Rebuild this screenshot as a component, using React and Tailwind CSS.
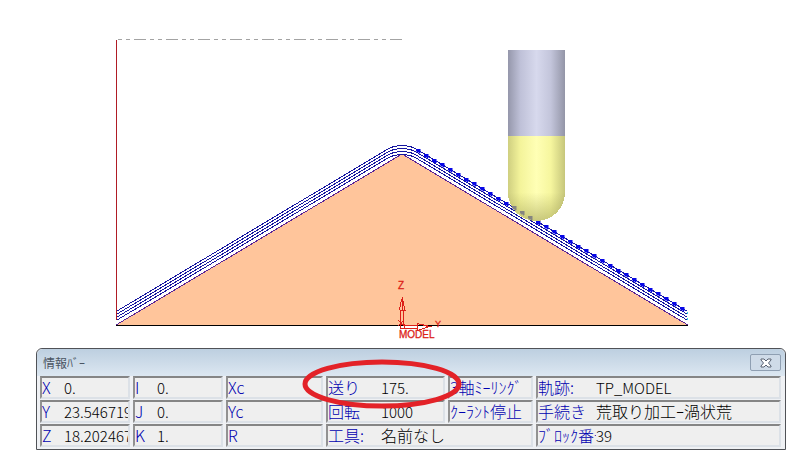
import React from "react";

const passes = [0, 3, 6, 9];
const dots = Array.from({ length: 34 }, (_, i) => ({
  x: 416 + i * 8,
  y: Math.round(149 + i * 4.78),
}));

function Toolpath() {
  return (
    <svg viewBox="0 0 812 348" className="block w-full" role="img" aria-label="Toolpath" shapeRendering="crispEdges">
      <defs>
        <linearGradient id="shank">
          <stop offset="0" stopColor="#9597ab" />
          <stop offset="0.22" stopColor="#bfc1d8" />
          <stop offset="0.5" stopColor="#d7d9ed" />
          <stop offset="0.75" stopColor="#c3c5db" />
          <stop offset="1" stopColor="#9395a7" />
        </linearGradient>
        <linearGradient id="cutter">
          <stop offset="0" stopColor="#cfcf80" />
          <stop offset="0.22" stopColor="#f4f49b" />
          <stop offset="0.5" stopColor="#ffffb5" />
          <stop offset="0.75" stopColor="#f6f69e" />
          <stop offset="1" stopColor="#c6c67b" />
        </linearGradient>
        <linearGradient id="ball" x1="0" y1="0" x2="0" y2="1">
          <stop offset="0" stopColor="#a5a55a" stopOpacity="0" />
          <stop offset="1" stopColor="#a5a55a" stopOpacity="0.6" />
        </linearGradient>
      </defs>

      <path d="M118 39.5H402" stroke="#a3a3a3" strokeDasharray="4 4 4 4 12 4" />
      <path d="M402 154L688 325H116Z" fill="#ffc59b" />
      <path d="M116 325L402 154L688 325" fill="none" stroke="#5a2496" />
      {passes.map((d) => (
        <path
          key={d}
          d={`M117 ${311 + d}L388 ${149 + d}Q394 ${145.5 + d} 402 ${145.5 + d}T416 ${149 + d}L687 ${311 + d}`}
          fill="none"
          stroke="#1717a0"
        />
      ))}
      <path d="M116.5 40V320" stroke="#b01c25" />
      <path d="M116 325.5H688" stroke="#000" />
      <path d="M687.5 312V320" stroke="#37cfe0" strokeDasharray="2 4" />

      <path d="M508 50H565V136H508Z" fill="url(#shank)" />
      <path d="M508 136H565V192.5A28.5 28.5 0 0 1 508 192.5Z" fill="url(#cutter)" />
      <path d="M508 192.5H565A28.5 28.5 0 0 1 508 192.5Z" fill="url(#ball)" />

      {dots.map(({ x, y }) => (
        <path
          key={x}
          d={`M${x} ${y}h4v4h-1v-1h-2v-1h-1z`}
          fill={x > 508 && x < 532 ? "#858580" : "#0707e6"}
          stroke={x > 508 && x < 532 ? "#858580" : "#0707e6"}
          strokeWidth="0.5"
        />
      ))}

      <g fill="none" stroke="#dc1f18">
        <path d="M400.5 325V310M403.5 325V310M399.5 310.5H405.5M399.5 310L401.5 299H402.5L405 310M402.5 297V310" />
        <path d="M403 325.5H418M403 328.5H418M417.5 323V330M417 323.5L430 326.5L417 330.5M426 326.5H432" />
        <path d="M398 320L404 326M404 320L398 326M400 324.5H404V328.5H400Z" />
      </g>
      <g fill="#dc1f18" stroke="#dc1f18" strokeWidth="0.3" className="font-['Liberation_Sans',sans-serif]">
        <text x="398" y="289" fontSize="10">Z</text>
        <text x="435" y="327" fontSize="9">Y</text>
        <text x="399" y="338" fontSize="10">MODEL</text>
      </g>
    </svg>
  );
}

function Cell({ label, value, labelClass = "w-[22px]", valueClass = "", className = "", children }) {
  return (
    <div className={`relative h-[23px] border-2 border-t-[#858585] border-l-[#929292] border-r-[#dce1e7] border-b-[#dce1e7] bg-[#efefef] ${className}`}>
      <dl className="flex h-full items-center text-[16px] leading-[19px] whitespace-nowrap">
        <dt className={`shrink-0 text-[#0000b0] ${labelClass}`}>{label}</dt>
        {value && <dd className={`min-w-0 text-black ${valueClass}`}>{value}</dd>}
      </dl>
      {children}
    </div>
  );
}

const Num = ({ children }) => <span className="text-[15px]">{children}</span>;

export default function App() {
  return (
    <main className="min-h-screen bg-white font-['Noto_Sans_CJK_JP',sans-serif] font-light">
      <Toolpath />
      <section className="mr-[26px] ml-9 rounded-t-md border border-[#505257] bg-[#eff1f4]">
        <header className="flex h-[27px] items-center justify-between rounded-t-md bg-linear-to-b from-[#bdcfe0] to-[#dce7f1] pr-1 pl-1.5">
          <h1 className="text-[12px] leading-5 font-normal text-[#4b5563]">情報ﾊﾞｰ</h1>
          <button
            type="button"
            aria-label="閉じる"
            className="flex h-[17px] w-[31px] items-center justify-center rounded-xs border border-[#8f9fb2] bg-[#cfdbe8]"
          >
            <svg width="12" height="10" viewBox="0 0 12 10">
              <path
                d="M1 1H4L6 3L8 1H11V2L8.5 5L11 8V9H8L6 7L4 9H1V8L3.5 5L1 2Z"
                fill="#fff"
                stroke="#596273"
              />
            </svg>
          </button>
        </header>
        <div className="grid grid-cols-[90px_90px_97px_119px_85px_1fr] gap-x-[3px] gap-y-px pr-1 pb-0.5 pl-[3px]">
          <Cell label="X" value={<Num>0.</Num>} />
          <Cell label="I" value={<Num>0.</Num>} />
          <Cell label="Xc" />
          <Cell label="送り" value={<Num>175.</Num>} labelClass="w-[53px]">
            <svg
              viewBox="0 0 160 50"
              className="pointer-events-none absolute -top-[19px] -left-[26px] z-10 h-[50px] w-[160px] max-w-none"
            >
              <ellipse cx="80" cy="25" rx="77" ry="22" fill="none" stroke="#e32228" strokeWidth="5" />
            </svg>
          </Cell>
          <Cell label="3軸ﾐｰﾘﾝｸﾞ" labelClass="w-full" />
          <Cell label="軌跡:" value={<Num>TP_MODEL</Num>} labelClass="w-[58px]" />

          <Cell label="Y" value={<Num>23.546719</Num>} valueClass="overflow-hidden" />
          <Cell label="J" value={<Num>0.</Num>} />
          <Cell label="Yc" />
          <Cell label="回転" value={<Num>1000</Num>} labelClass="w-[53px]" />
          <Cell label="ｸｰﾗﾝﾄ停止" labelClass="w-full" />
          <Cell label="手続き" value="荒取り加工ｰ渦状荒" labelClass="w-[58px]" />

          <Cell label="Z" value={<Num>18.202467</Num>} valueClass="overflow-hidden" />
          <Cell label="K" value={<Num>1.</Num>} />
          <Cell label="R" />
          <Cell label="工具:" value="名前なし" labelClass="w-[53px]" className="col-span-2" />
          <Cell label="ﾌﾞﾛｯｸ番号" value={<Num>39</Num>} labelClass="w-[58px] overflow-hidden" />
        </div>
      </section>
    </main>
  );
}
